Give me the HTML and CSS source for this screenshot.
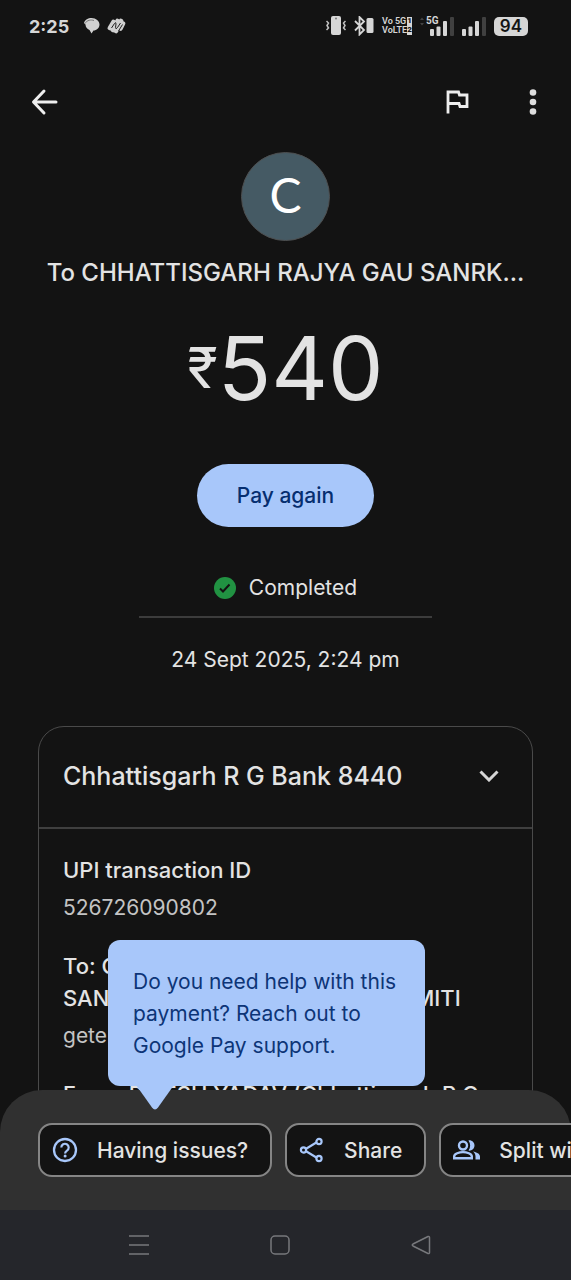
FILE: index.html
```html
<!DOCTYPE html>
<html lang="en">
<head>
<meta charset="utf-8">
<meta name="viewport" content="width=device-width, initial-scale=1">
<title>Payment details</title>
<link rel="stylesheet" href="styles.css">
</head>
<body>
<div class="statusbar">
  <div class="status-left">
    <time class="clock">2:25</time>
    <svg width="16" height="16" viewBox="0 0 16 16"><path d="M0 5C1 1.500 4 0 7.500 0C12 0 15.500 3 15.500 6.500C15.500 10 12.500 12.500 9.500 12.500L7.500 15.500L5.500 12C3 11 1.500 9 1.500 6.500Z" fill="#d0d0d0"/><path d="M1 5.500C3 2 7 1.500 10 2.500" fill="none" stroke="#777" stroke-width="1"/></svg>
    <svg width="19" height="16" viewBox="0 0 19 16"><g fill="none" stroke="#d0d0d0" stroke-width="4.600" stroke-linecap="round"><path d="M3 10L6.500 4"/><path d="M6 12L10.500 3"/><path d="M9 13L14 3"/><path d="M13.500 10.500L16 5.500"/></g><path d="M4.500 10L7.500 5.500Q9 3.500 9 6L8.500 9.500Q8.500 12 10.500 9.500L13.500 5M11.500 13L15.500 6.500" fill="none" stroke="#222" stroke-width="1"/></svg>
  </div>
  <div class="status-right">
    <svg width="20" height="20" viewBox="0 0 20 20"><rect x="5" y="0" width="10" height="19" rx="2" fill="#d6d6d6"/><circle cx="10" cy="2.500" r="1" fill="#777"/><path d="M.5 5l2 2-1.500 2.500L2.500 12l-2 2M19.500 5l-2 2 1.500 2.500-1.500 2.500 2 2" fill="none" stroke="#c4c4c4" stroke-width="1.500"/></svg>
    <svg width="20" height="20" viewBox="0 0 20 20"><path d="M1 5l9 9-4.500 4.500V1L10 5.500 1 14.500" fill="none" stroke="#d6d6d6" stroke-width="1.800"/><rect x="12.500" y="2" width="7" height="15" rx="1.500" fill="#d6d6d6"/></svg>
    <span class="volte"><span>Vo 5G<b>1</b></span><span>VoLTE<b>2</b></span></span>
    <svg width="34" height="21" viewBox="0 0 34 21"><path d="M0 4l2-2.500L4 4zM0 7l2 2.500L4 7z" fill="#444"/><text class="net" x="6" y="8">5G</text><g fill="#d6d6d6"><rect x="10" y="13" width="4" height="7" rx="1"/><rect x="16.500" y="10.500" width="4" height="9.500" rx="1"/><rect x="23" y="5" width="4" height="15" rx="1"/></g><rect x="30" y="1" width="4" height="19" rx="1" fill="#404040"/></svg>
    <svg width="24" height="21" viewBox="0 0 24 21"><g fill="#d6d6d6"><rect x="0" y="13" width="4" height="7" rx="1"/><rect x="6.500" y="10.500" width="4" height="9.500" rx="1"/><rect x="13" y="5" width="4" height="15" rx="1"/></g><rect x="20" y="1" width="4" height="19" rx="1" fill="#404040"/></svg>
    <span class="battery">94</span>
  </div>
</div>

<header class="appbar">
  <button class="icon-btn" aria-label="Back"><svg width="28" height="28" viewBox="0 0 28 28"><path d="M14 3L3.500 14 14 25M4 14h22" fill="none" stroke="#eee" stroke-width="3" stroke-linecap="round" stroke-linejoin="round"/></svg></button>
  <span class="grow"></span>
  <button class="icon-btn" aria-label="Report"><svg width="28" height="28" viewBox="0 0 28 28"><path d="M5 25.500V4h10.500l1 3h7.500v11.500h-7l-1-3H5" fill="none" stroke="#eee" stroke-width="2.800"/></svg></button>
  <button class="icon-btn" aria-label="More options"><svg width="28" height="28" viewBox="0 0 28 28"><g fill="#ddd"><circle cx="14" cy="4.500" r="3.300"/><circle cx="14" cy="14" r="3.300"/><circle cx="14" cy="23.500" r="3.300"/></g></svg></button>
</header>

<main class="content">
  <div class="avatar">C</div>
  <h1 class="payee">To CHHATTISGARH RAJYA GAU SANRK...</h1>
  <p class="amount"><span class="rupee">₹</span>540</p>
  <button class="pay">Pay again</button>
  <p class="state"><svg width="22" height="22" viewBox="0 0 22 22"><circle cx="11" cy="11" r="11" fill="#219242"/><path d="M6 11.500l3 3 6.500-7" fill="none" stroke="#131313" stroke-width="2"/></svg>Completed</p>
  <p class="date">24 Sept 2025, 2:24 pm</p>

  <section class="card">
    <button class="card-head"><span>Chhattisgarh R G Bank 8440</span><svg width="20" height="12" viewBox="0 0 20 12"><path d="M1.500 1.500L10 10l8.500-8.500" fill="none" stroke="#d6d6d6" stroke-width="3"/></svg></button>
    <dl class="details">
      <dt>UPI transaction ID</dt>
      <dd>526726090802</dd>
      <dt>To: CHHATTISGARH RAJYA GAU<br>SANRAKSHAN AND WELFARE SAMITI</dt>
      <dd>getepay</dd>
      <dt>From: RITESH YADAV (Chhattisgarh R G</dt>
    </dl>
  </section>
</main>

<footer class="sheet">
  <div class="chips">
    <button class="chip"><svg width="26" height="26" viewBox="0 0 26 26"><circle cx="13" cy="13" r="11" fill="none" stroke="#a8c7fa" stroke-width="2.300"/><path d="M9.300 10.500a3.700 3.700 0 1 1 5.700 3.100c-1.300.9-1.900 1.400-1.900 3" fill="none" stroke="#a8c7fa" stroke-width="2.200"/><circle cx="13.100" cy="19" r="1.500" fill="#a8c7fa"/></svg>Having issues?</button>
    <button class="chip"><svg width="26" height="26" viewBox="0 0 26 26"><g fill="none" stroke="#a8c7fa" stroke-width="2.200"><path d="M19 4.500L5 13l14 8.500"/><g fill="#131313"><circle cx="20" cy="4.500" r="2.600"/><circle cx="4.500" cy="13" r="2.600"/><circle cx="20" cy="21.500" r="2.600"/></g></g></svg>Share</button>
    <button class="chip"><svg width="27" height="26" viewBox="0 0 27 26"><g fill="none" stroke="#a8c7fa" stroke-width="2.400"><circle cx="10" cy="8.500" r="4"/><path d="M1.200 21.300v-2c0-2.500 5-4.200 8.800-4.200s8.800 1.700 8.800 4.200v2z"/></g><path d="M15.500 3.400c3-.5 6 1.800 6 5.100s-3 5.600-6 5.100c2.200-3 2.200-7.200 0-10.200zM20 14.500c3.500.7 7 2.200 7 5v3h-4.500v-3c0-2-.8-3.600-2.500-5z" fill="#a8c7fa"/></svg>Split with friends</button>
  </div>
  <div class="tooltip" role="tooltip">Do you need help with this<br>payment? Reach out to<br>Google Pay support.<svg class="tip" width="38" height="26" viewBox="0 0 38 26"><path d="M0 0h38L22 22.500q-3 4-6 0z" fill="#a8c7fa"/></svg></div>
</footer>

<nav class="navbar">
  <button class="nav-btn" aria-label="Recent apps"><svg width="20" height="20" viewBox="0 0 20 20"><path d="M0 1h20M0 10h20M0 19h20" stroke="#77787c" stroke-width="1.500"/></svg></button>
  <button class="nav-btn" aria-label="Home"><svg width="20" height="20" viewBox="0 0 20 20"><rect x="1" y="1" width="18" height="18" rx="4" fill="none" stroke="#77787c" stroke-width="1.500"/></svg></button>
  <button class="nav-btn" aria-label="Go back"><svg width="20" height="20" viewBox="0 0 20 20"><path d="M17 1.500L2 9q-1.500 1 0 2l15 7.500q1.500.5 1.500-1V2.500q0-1.500-1.500-1z" fill="none" stroke="#77787c" stroke-width="1.500"/></svg></button>
</nav>
</body>
</html>
```

FILE: styles.css
```css
* { box-sizing: border-box; }

body {
  margin: 0;
  height: 100vh;
  display: flex;
  flex-direction: column;
  overflow: hidden;
  background: #131313;
  color: #e3e3e3;
  font-family: Inter, Roboto, sans-serif;
  font-size: 21px;
}

button {
  border: 0;
  padding: 0;
  background: none;
  color: inherit;
  font: inherit;
  cursor: pointer;
}

svg { display: block; flex: none; }
h1, p, dl, dd { margin: 0; }

.statusbar {
  flex: none;
  height: 52px;
  padding: 0 43px 0 29px;
  display: flex;
  align-items: center;
  justify-content: space-between;
  color: #d6d6d6;
}
.status-left, .status-right { display: flex; align-items: center; }
.status-left { gap: 7px; }
.status-right { gap: 8px; }
.clock { font-size: 18px; font-weight: 700; margin-right: 8px; }
.volte {
  display: flex;
  flex-direction: column;
  font: 600 9px/9px Roboto, sans-serif;
}
.volte span { display: flex; justify-content: space-between; white-space: pre; }
.volte b { background: #d6d6d6; color: #131313; font-size: 8px; line-height: 8px; }
.net { font: 700 10px Roboto, sans-serif; fill: #d6d6d6; }
.battery {
  background: #d6d6d6;
  color: #131313;
  border-radius: 5px;
  padding: 0 6px;
  font-size: 17px;
  line-height: 19px;
  font-weight: 600;
}

.appbar { flex: none; height: 100px; padding: 0 24px 0 30px; display: flex; align-items: center; }
.grow { flex: 1; }
.icon-btn + .icon-btn { margin-left: 48px; }

.content {
  flex: 1;
  min-height: 0;
  margin-bottom: -42px;
  overflow: hidden;
  display: flex;
  flex-direction: column;
  align-items: center;
}
.avatar {
  flex: none;
  width: 89px;
  height: 89px;
  border-radius: 50%;
  border: 1px solid #4d4f50;
  background: #455a64;
  color: #fff;
  font: 48px/84px Lato, sans-serif;
  text-align: center;
}
.payee { margin-top: 16px; font-size: 24px; line-height: 32px; font-weight: 500; white-space: nowrap; }
.amount { display: flex; align-items: center; margin-top: 23px; font-size: 88px; line-height: 112px; }
.rupee { font-size: 56px; }
.pay {
  flex: none;
  margin-top: 40px;
  height: 63px;
  padding: 0 40px;
  border-radius: 32px;
  background: #a8c7fa;
  color: #062e6f;
  font-weight: 500;
}
.state {
  flex: none;
  width: 293px;
  margin-top: 41px;
  padding-bottom: 8px;
  border-bottom: 2px solid #3c3c3c;
  display: flex;
  align-items: center;
  justify-content: center;
  gap: 13px;
  line-height: 40px;
}
.date { margin-top: 22px; line-height: 40px; }

.card {
  flex: none;
  align-self: stretch;
  margin: 46px 38px 0;
  border: 1px solid #4a4a4a;
  border-radius: 26px;
}
.card-head {
  width: 100%;
  height: 102px;
  padding: 0 33px 2px 24px;
  border-bottom: 2px solid #3f3f3f;
  display: flex;
  align-items: center;
  justify-content: space-between;
  font-size: 25px;
  font-weight: 500;
}
.details { padding: 25px 24px; line-height: 32px; }
.details dt { font-size: 22px; font-weight: 500; white-space: nowrap; }
.details dd { margin: 6px 0 26px; color: #c4c4c4; }

.sheet {
  flex: none;
  position: relative;
  height: 120px;
  padding: 33px 0 0 38px;
  background: #303030;
  border-radius: 42px 42px 0 0;
}
.chips { display: flex; gap: 13px; overflow: hidden; }
.chip {
  flex: none;
  height: 54px;
  padding: 0 22px 0 12px;
  display: flex;
  align-items: center;
  gap: 19px;
  border: 2px solid #858585;
  border-radius: 14px;
  background: #131313;
  font-weight: 500;
  white-space: nowrap;
}
.tooltip {
  position: absolute;
  left: 108px;
  bottom: 124px;
  padding: 26px 29px 24px 25px;
  border-radius: 12px;
  background: #a8c7fa;
  color: #0d3577;
  line-height: 32px;
  white-space: nowrap;
}
.tip { position: absolute; left: 28px; top: 100%; margin-top: -1px; }

.navbar {
  flex: none;
  height: 70px;
  padding: 0 80px 0 68px;
  display: flex;
  align-items: center;
  background: #25262b;
}
.nav-btn { flex: 1; display: flex; justify-content: center; }
```
